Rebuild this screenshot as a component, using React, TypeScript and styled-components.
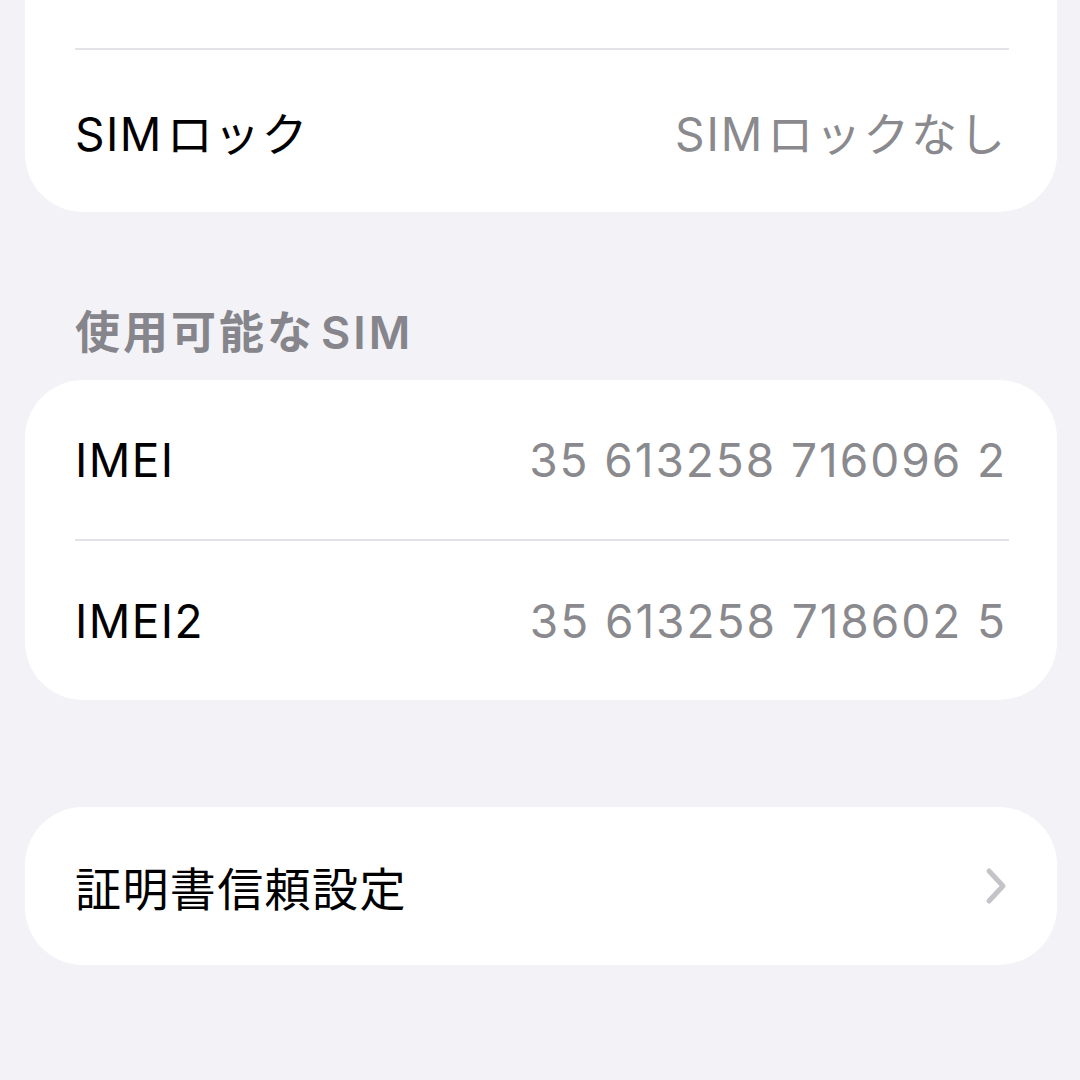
import React from "react";
import styled, { createGlobalStyle } from "styled-components";

const GlobalStyle = createGlobalStyle`
  html, body {
    margin: 0;
    padding: 0;
    background: #f2f2f7;
  }
  body {
    font-family: "Inter", "Noto Sans CJK JP", sans-serif;
    -webkit-font-smoothing: antialiased;
  }
`;

const Screen = styled.div`
  width: 1080px;
  height: 1080px;
  overflow: hidden;
  background: #f2f2f7;
  display: flex;
  flex-direction: column;
  padding: 0 23px 0 25px;
  box-sizing: border-box;
`;

const Card = styled.div<{ $clipped?: boolean; $gapAbove?: number }>`
  background: #ffffff;
  border-radius: ${(p) => (p.$clipped ? "0 0 58px 58px" : "58px")};
  margin-top: ${(p) => p.$gapAbove ?? 0}px;
  display: flex;
  flex-direction: column;
  padding-left: 50px;
  overflow: hidden;
`;

const TopSpacer = styled.div`
  height: 48px;
`;

const Divider = styled.div`
  height: 2px;
  margin-right: 48px;
  background: #e3e3e7;
`;

const Row = styled.div<{ $height?: number }>`
  height: ${(p) => p.$height ?? 159}px;
  display: flex;
  align-items: center;
  justify-content: space-between;
  padding-right: 50px;
  box-sizing: border-box;
`;

const Label = styled.div`
  font-size: 46px;
  color: #000000;
  letter-spacing: 1.4px;
`;

const Value = styled.div`
  font-size: 46px;
  color: #8a8a8e;
  letter-spacing: 1.95px;
`;

const SectionHeader = styled.div`
  margin-top: 85px;
  padding-left: 50px;
  height: 83px;
  font-size: 45px;
  font-weight: 600;
  color: #85858b;
  letter-spacing: 3px;
`;

const Gap = styled.span<{ $w?: number }>`
  margin-left: ${(p) => p.$w ?? 6}px;
`;

const Chevron = () => (
  <svg width="22" height="38" viewBox="0 0 22 38" fill="none">
    <path
      d="M4 4 L18 19 L4 34"
      stroke="#c4c4c8"
      strokeWidth="5"
      strokeLinecap="round"
      strokeLinejoin="round"
    />
  </svg>
);

const App = () => {
  return (
    <>
      <GlobalStyle />
      <Screen>
        <Card $clipped>
          <TopSpacer />
          <Divider />
          <Row $height={162}>
            <Label>
              SIM<Gap $w={4} />ロック
            </Label>
            <Value>
              SIM<Gap $w={3} />ロックなし
            </Value>
          </Row>
        </Card>

        <SectionHeader>
          使用可能な<Gap />SIM
        </SectionHeader>

        <Card>
          <Row>
            <Label>IMEI</Label>
            <Value>35 613258 716096 2</Value>
          </Row>
          <Divider />
          <Row>
            <Label>IMEI2</Label>
            <Value>35 613258 718602 5</Value>
          </Row>
        </Card>

        <Card $gapAbove={107}>
          <Row $height={158}>
            <Label>証明書信頼設定</Label>
            <Chevron />
          </Row>
        </Card>
      </Screen>
    </>
  );
};

export default App;
